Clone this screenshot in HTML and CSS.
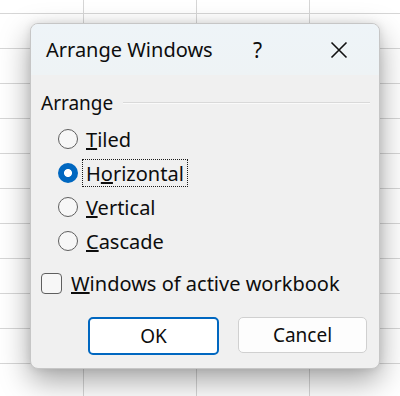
FILE: index.html
```html
<!DOCTYPE html>
<html lang="en">
<head>
  <meta charset="UTF-8" />
  <title>Arrange Windows</title>
  <link rel="stylesheet" href="styles.css">
</head>
<body>

<div class="dialog">
  <div class="titlebar">
    <span class="title">Arrange Windows</span>
    <span class="help">?</span>
    <span class="close">
      <svg width="18" height="18" viewBox="0 0 18 18"><path d="M1.5 1.5 L16.5 16.5 M16.5 1.5 L1.5 16.5" stroke="#111" stroke-width="1.6" fill="none"/></svg>
    </span>
  </div>

  <div class="content">
    <div class="group-head">
      <span>Arrange</span>
      <span class="rule"></span>
    </div>

    <div class="options">
      <div class="option"><span class="radio"></span><span class="text"><u>T</u>iled</span></div>
      <div class="option"><span class="radio checked"></span><span class="text focus">H<u>o</u>rizontal</span></div>
      <div class="option"><span class="radio"></span><span class="text"><u>V</u>ertical</span></div>
      <div class="option"><span class="radio"></span><span class="text"><u>C</u>ascade</span></div>
    </div>

    <div class="check"><span class="box"></span><span><u>W</u>indows of active workbook</span></div>

    <div class="buttons">
      <button class="btn primary">OK</button>
      <button class="btn">Cancel</button>
    </div>
  </div>
</div>

</body>
</html>
```

FILE: styles.css
```css
body {
  margin: 0;
  width: 400px;
  height: 396px;
  overflow: hidden;
  font-family: 'Noto Sans', 'Open Sans', sans-serif;
  color: #0d0d0d;
  background-color: #fff;
  background-image:
    linear-gradient(to right, #d6d6d6 1px, transparent 1px),
    linear-gradient(to bottom, #d6d6d6 1px, transparent 1px);
  background-size: 113px 35px;
  background-position: 83px 13px;
  padding-top: 23px;
  box-sizing: border-box;
}
.dialog {
  margin-left: 30px;
  width: 350px;
  height: 346px;
  box-sizing: border-box;
  border: 1px solid #c6c6c6;
  border-radius: 8px;
  background: #f0f0f0;
  box-shadow: 0 12px 30px rgba(0,0,0,0.36), 0 0 8px rgba(0,0,0,0.1);
  overflow: hidden;
}
.titlebar {
  height: 51px;
  display: flex;
  align-items: center;
  padding-left: 15px;
  background: linear-gradient(to bottom, #eef4f8, #eef3f5);
}
.title {
  font-size: 20px;
  width: 207px;
}
.help {
  font-size: 21px;
  width: 77px;
}
.close {
  width: 40px;
  display: flex;
  align-items: center;
}
.content {
  padding: 18px 9px 13px 10px;
}
.group-head {
  display: flex;
  align-items: center;
  height: 20px;
  font-size: 19px;
}
.rule {
  flex: 1;
  height: 1px;
  margin-left: 10px;
  background: #d9d9d9;
  border-bottom: 1px solid #fafafa;
}
.options {
  margin-top: 9px;
  padding-left: 17px;
}
.option {
  height: 34px;
  display: flex;
  align-items: center;
  font-size: 20px;
}
.radio {
  width: 18px;
  height: 18px;
  border: 1px solid #5f5f5f;
  border-radius: 50%;
  background: #f7f7f7;
  margin-right: 4px;
}
.radio.checked {
  width: 20px;
  height: 20px;
  border: none;
  background: radial-gradient(circle, #fff 0, #fff 3.6px, #0067c0 4.4px);
}
.text {
  padding: 1px 3px 0;
  line-height: 25px;
  border: 1px dotted transparent;
}
.text.focus {
  border-color: #1b1b1b;
}
.check {
  margin-top: 13px;
  display: flex;
  align-items: center;
  height: 24px;
  font-size: 20px;
}
.box {
  width: 19px;
  height: 19px;
  border: 1px solid #5f5f5f;
  border-radius: 4px;
  background: #f7f7f7;
  margin-right: 9px;
}
.buttons {
  margin-top: 22px;
  display: flex;
  justify-content: flex-end;
  gap: 19px;
  padding-right: 3px;
}
.btn {
  font-family: inherit;
  font-size: 19px;
  color: #0d0d0d;
  width: 129px;
  height: 36px;
  background: #fdfdfd;
  border: 1px solid #d0d0d0;
  border-radius: 5px;
}
.btn.primary {
  width: 131px;
  height: 38px;
  background: #fff;
  border: 2px solid #0067c0;
}
```
